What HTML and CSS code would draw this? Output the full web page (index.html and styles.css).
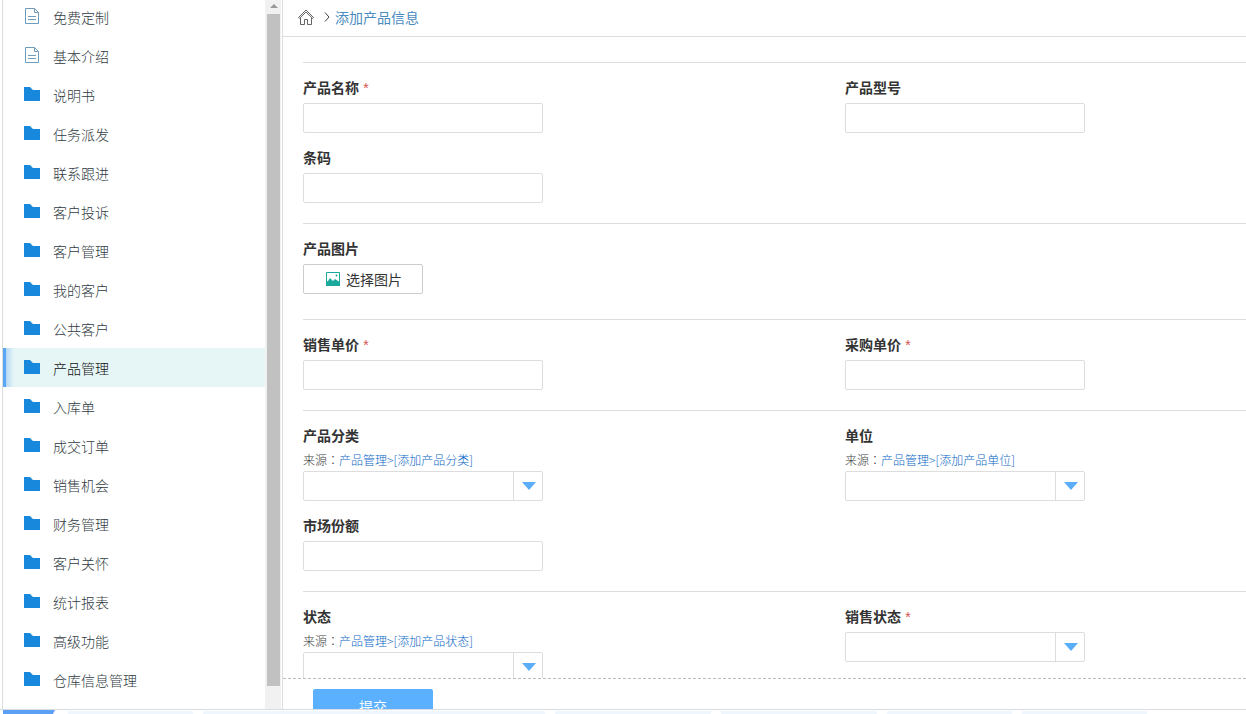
FILE: index.html
```
<!DOCTYPE html>
<html lang="zh-CN">
<head>
<meta charset="utf-8">
<title>添加产品信息</title>
<link rel="stylesheet" href="styles.css">
</head>
<body>
<svg class="defs" aria-hidden="true">
  <symbol id="doc" viewBox="0 0 16 16">
    <path d="M1.5.5h9l4 4v11h-13z M10.5.5v4h4 M4 8.5h8 M4 11.5h8" fill="none" stroke="#6f9bbd"/>
  </symbol>
  <symbol id="folder" viewBox="0 0 16 14">
    <path d="M0 0h6l3 3h7v11H0z" fill="#1788dc"/>
  </symbol>
</svg>
<div class="workspace">
  <aside class="sidebar">
    <nav class="menu">
      <a class="item" href="#"><svg class="icon"><use href="#doc"/></svg>免费定制</a>
      <a class="item" href="#"><svg class="icon"><use href="#doc"/></svg>基本介绍</a>
      <a class="item" href="#"><svg class="icon folder"><use href="#folder"/></svg>说明书</a>
      <a class="item" href="#"><svg class="icon folder"><use href="#folder"/></svg>任务派发</a>
      <a class="item" href="#"><svg class="icon folder"><use href="#folder"/></svg>联系跟进</a>
      <a class="item" href="#"><svg class="icon folder"><use href="#folder"/></svg>客户投诉</a>
      <a class="item" href="#"><svg class="icon folder"><use href="#folder"/></svg>客户管理</a>
      <a class="item" href="#"><svg class="icon folder"><use href="#folder"/></svg>我的客户</a>
      <a class="item" href="#"><svg class="icon folder"><use href="#folder"/></svg>公共客户</a>
      <a class="item active" href="#" aria-current="page"><svg class="icon folder"><use href="#folder"/></svg>产品管理</a>
      <a class="item" href="#"><svg class="icon folder"><use href="#folder"/></svg>入库单</a>
      <a class="item" href="#"><svg class="icon folder"><use href="#folder"/></svg>成交订单</a>
      <a class="item" href="#"><svg class="icon folder"><use href="#folder"/></svg>销售机会</a>
      <a class="item" href="#"><svg class="icon folder"><use href="#folder"/></svg>财务管理</a>
      <a class="item" href="#"><svg class="icon folder"><use href="#folder"/></svg>客户关怀</a>
      <a class="item" href="#"><svg class="icon folder"><use href="#folder"/></svg>统计报表</a>
      <a class="item" href="#"><svg class="icon folder"><use href="#folder"/></svg>高级功能</a>
      <a class="item" href="#"><svg class="icon folder"><use href="#folder"/></svg>仓库信息管理</a>
    </nav>
    <div class="scrollbar" aria-hidden="true">
      <div class="scroll-up"></div>
      <div class="scroll-thumb"></div>
    </div>
  </aside>
  <main class="main">
    <header class="crumbs">
      <a class="home" href="#" aria-label="首页">
        <svg width="16" height="16" viewBox="0 0 16 16" fill="none" stroke="#666">
          <path d="M.5 8.5 8 1l7.500 7.500-1 .8L8 3 1.500 9.300z M2.500 8.500v7h4v-5h3v5h4v-7"/>
        </svg>
      </a>
      <svg width="6" height="10" viewBox="0 0 6 10" fill="none" stroke="#444" aria-hidden="true"><path d="M1 .5 5 5 1 9.500"/></svg>
      <a class="crumb" href="#">添加产品信息</a>
    </header>
    <form class="form" id="product">
      <section class="group">
        <div class="field"><label for="name">产品名称 <span class="req">*</span></label><input id="name" class="box" type="text"></div>
        <div class="field"><label for="model">产品型号</label><input id="model" class="box" type="text"></div>
        <div class="field"><label for="barcode">条码</label><input id="barcode" class="box" type="text"></div>
      </section>
      <section class="group pictures">
        <div class="field">
          <label for="picture">产品图片</label>
          <button id="picture" class="pick" type="button">
            <svg width="14" height="14" viewBox="0 0 14 14" aria-hidden="true">
              <path d="M.5.5h13v13H.5z" fill="#fff" stroke="#1aa99c"/>
              <path d="M0 10l2-1 2-3 3 3 2-2 3 2 2 1v4H0z" fill="#1aa99c"/>
              <circle cx="10.500" cy="3.500" r="1" fill="#1aa99c"/>
            </svg>选择图片</button>
        </div>
      </section>
      <section class="group">
        <div class="field"><label for="price">销售单价 <span class="req">*</span></label><input id="price" class="box" type="text"></div>
        <div class="field"><label for="cost">采购单价 <span class="req">*</span></label><input id="cost" class="box" type="text"></div>
      </section>
      <section class="group">
        <div class="field">
          <label for="category">产品分类</label>
          <p class="source">来源<span class="colon" lang="zh-TW">：</span><a href="#">产品管理&gt;[添加产品分类]</a></p>
          <div class="drop"><select id="category" class="box"><option></option></select></div>
        </div>
        <div class="field">
          <label for="unit">单位</label>
          <p class="source">来源<span class="colon" lang="zh-TW">：</span><a href="#">产品管理&gt;[添加产品单位]</a></p>
          <div class="drop"><select id="unit" class="box"><option></option></select></div>
        </div>
        <div class="field"><label for="share">市场份额</label><input id="share" class="box" type="text"></div>
      </section>
      <section class="group">
        <div class="field">
          <label for="state">状态</label>
          <p class="source">来源<span class="colon" lang="zh-TW">：</span><a href="#">产品管理&gt;[添加产品状态]</a></p>
          <div class="drop"><select id="state" class="box"><option></option></select></div>
        </div>
        <div class="field">
          <label for="sale">销售状态 <span class="req">*</span></label>
          <div class="drop"><select id="sale" class="box"><option></option></select></div>
        </div>
      </section>
    </form>
    <footer class="actions"><button class="submit" type="submit" form="product">提交</button></footer>
  </main>
</div>
<div class="tabs" aria-hidden="true">
  <span class="tab current"></span>
  <span class="tab short"></span>
  <span class="tab long"></span>
  <span class="tab medium"></span>
  <span class="tab medium"></span>
  <span class="tab short"></span>
  <span class="tab short"></span>
</div>
</body>
</html>
```
FILE: styles.css
```
* { box-sizing: border-box; }
body {
  margin: 0;
  height: 100vh;
  display: flex;
  flex-direction: column;
  overflow: hidden;
  background: #fff;
  color: #333;
  font: 14px/20px "Noto Sans CJK SC", sans-serif;
}
a { text-decoration: none; }
.defs { display: none; }

.workspace {
  flex: 1;
  min-height: 0;
  display: flex;
  padding-left: 2px;
  border-bottom: 1px solid #d9dde2;
}

.sidebar {
  flex: none;
  width: 281px;
  display: flex;
  border: solid #ddd;
  border-width: 0 1px;
  overflow: hidden;
}
.menu { flex: 1; margin-top: -3px; }
.item {
  display: flex;
  align-items: center;
  gap: 13px;
  height: 39px;
  padding: 1px 0 0 21px;
  color: #2f3a42;
  font-weight: 300;
}
.item.active {
  padding-left: 18px;
  border-left: 3px solid #5ba5f5;
  background: linear-gradient(90deg, #b5d8f5, #e6f5f5 8px);
  color: #111;
}
.icon { flex: none; width: 16px; height: 16px; margin-bottom: 3px; }
.folder { height: 14px; margin-bottom: 2px; }

.scrollbar {
  width: 16px;
  margin-right: 1px;
  padding: 0 1px 23px 2px;
  display: flex;
  flex-direction: column;
  background: #f1f1f1;
}
.scroll-up { height: 14px; padding: 4px 0 0 3px; }
.scroll-up::before {
  content: "";
  display: block;
  width: 0;
  border: solid transparent;
  border-width: 0 4px 4px;
  border-bottom-color: #999;
}
.scroll-thumb { flex: 1; background: #c1c1c1; }

.main { flex: 1; min-width: 0; display: flex; flex-direction: column; }
.crumbs {
  flex: none;
  height: 37px;
  display: flex;
  align-items: center;
  padding: 0 0 2px 15px;
  border-bottom: 1px solid #ddd;
}
.home { display: flex; margin-right: 10px; }
.crumb { margin-left: 5px; color: #4a8bc0; }

.form { flex: 1; min-height: 0; overflow: hidden; padding: 25px 0 0 20px; }
.group {
  display: grid;
  grid-template-columns: minmax(0, 542px) 1fr;
  align-items: start;
  padding-bottom: 20px;
  border-top: 1px solid #ddd;
}
.pictures { padding-bottom: 25px; }
.field { padding-top: 14px; }
.field label { display: block; height: 20px; margin-bottom: 6px; font-weight: 700; }
.req { margin-left: 1px; color: #d9534f; font: 14px/1 "Liberation Sans", sans-serif; }
.source { height: 20px; margin: -1px 0 1px; font-size: 12px; font-weight: 300; color: #444; }
.source a { color: #0866c6; }
.colon { font-family: "Noto Sans CJK TC", sans-serif; }
.box {
  display: block;
  width: 240px;
  height: 30px;
  padding: 0 8px;
  border: 1px solid #ddd;
  border-radius: 2px;
  background: #fff;
  font: inherit;
}
.drop { position: relative; width: 240px; }
.drop select { appearance: none; }
.drop::before {
  content: "";
  position: absolute;
  top: 0;
  bottom: 0;
  right: 29px;
  border-left: 1px solid #ddd;
}
.drop::after {
  content: "";
  position: absolute;
  top: 11px;
  right: 7px;
  border: solid transparent;
  border-width: 8px 7px 0;
  border-top-color: #5aaef8;
}
.pick {
  display: flex;
  align-items: center;
  justify-content: center;
  gap: 6px;
  width: 120px;
  height: 30px;
  padding: 0 0 1px 2px;
  border: 1px solid #ccc;
  border-radius: 2px;
  background: #fff;
  color: #333;
  font: inherit;
}

.actions {
  flex: none;
  height: 31px;
  padding: 10px 0 0 30px;
  border-top: 1px dashed #bbb;
  overflow: hidden;
}
.submit {
  display: block;
  width: 120px;
  height: 34px;
  padding: 0;
  border: 0;
  border-radius: 2px;
  background: #5bb0ff;
  color: #fff;
  font: inherit;
}

.tabs { flex: none; display: flex; gap: 10px; height: 4px; padding-left: 3px; }
.tab { margin-top: 1px; background: #f0f6fd; }
.tab.current {
  width: 52px;
  margin: 0 3px 0 0;
  background: #5ba0f5;
  clip-path: polygon(0 0, 100% 0, calc(100% - 2px) 100%, 0 100%);
}
.short { width: 125px; }
.medium { width: 156px; }
.long { width: 342px; }
```
